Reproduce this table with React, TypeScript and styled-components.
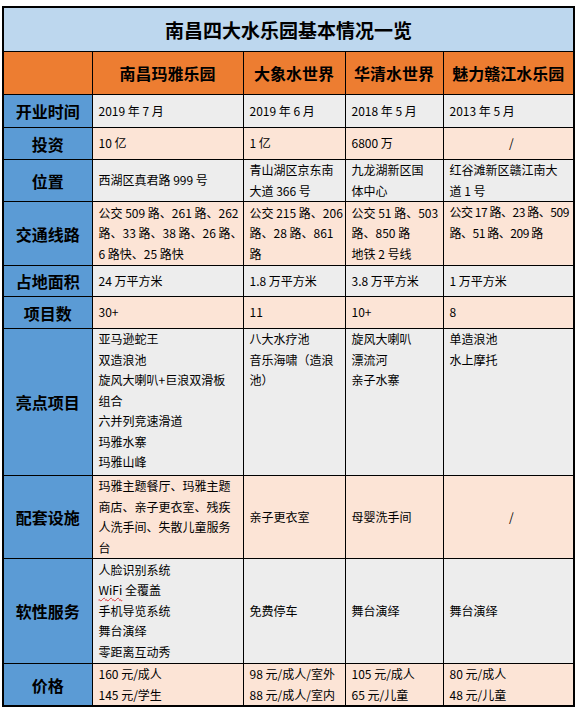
import React from 'react'
import styled, { createGlobalStyle } from 'styled-components'

type Tone = 'gray' | 'peach'

type CellData = {
    lines: string[]
    top?: boolean
    center?: boolean
    tight?: boolean
}

type RowData = {
    label: string
    height: number
    tone: Tone
    cells: CellData[]
}

const GlobalStyle = createGlobalStyle`
    body {
        margin: 0;
        background: #ffffff;
        font-family: 'Noto Sans CJK SC', 'Noto Sans', sans-serif;
        color: #000000;
    }
`

const Page = styled.div`
    padding: 6px 0 0 2px;
`

const Table = styled.table`
    width: 571px;
    table-layout: fixed;
    border-collapse: collapse;
    border: 2px solid #000000;
`

const Col = styled.col<{ $w: number }>`
    width: ${(p) => p.$w}px;
`

const TitleCell = styled.th`
    height: 43px;
    padding: 0;
    background: #bdd7ee;
    font-size: 19px;
    font-weight: 700;
    text-align: center;
    vertical-align: middle;
    border: 1px solid #000000;
`

const CornerCell = styled.th`
    height: 42px;
    padding: 0;
    background: #ed7d31;
    border: 1px solid #000000;
    border-top: none;
`

const HeadCell = styled.th`
    height: 42px;
    padding: 0;
    background: #ed7d31;
    font-size: 16px;
    font-weight: 700;
    text-align: center;
    vertical-align: middle;
    white-space: nowrap;
    border: 1px solid #000000;
    border-top: none;
`

const LabelCell = styled.th<{ $h: number }>`
    height: ${(p) => p.$h}px;
    padding: 0;
    background: #5b9bd5;
    font-size: 16px;
    font-weight: 700;
    text-align: center;
    vertical-align: middle;
    border: 1px solid #000000;
`

const DataCell = styled.td<{ $h: number; $tone: Tone; $top?: boolean; $center?: boolean; $tight?: boolean }>`
    height: ${(p) => p.$h}px;
    padding: 0 0 0 6px;
    background: ${(p) => (p.$tone === 'gray' ? '#ededed' : '#fce4d6')};
    font-size: 12px;
    line-height: 20.5px;
    letter-spacing: ${(p) => (p.$tight ? '-0.45px' : '0')};
    text-align: ${(p) => (p.$center ? 'center' : 'left')};
    vertical-align: ${(p) => (p.$top ? 'top' : 'middle')};
    border: 1px solid #000000;
    overflow: hidden;
`

const Line = styled.div`
    white-space: nowrap;
`

const Typo = styled.span`
    text-decoration: underline wavy #e03030;
    text-decoration-thickness: 1px;
    text-underline-offset: 2px;
`

const widths = [89, 151, 102, 98, 131]

const parks = ['南昌玛雅乐园', '大象水世界', '华清水世界', '魅力赣江水乐园']

const rows: RowData[] = [
    {
        label: '开业时间',
        height: 32,
        tone: 'gray',
        cells: [
            { lines: ['2019 年 7 月'] },
            { lines: ['2019 年 6 月'] },
            { lines: ['2018 年 5 月'] },
            { lines: ['2013 年 5 月'] },
        ],
    },
    {
        label: '投资',
        height: 31,
        tone: 'peach',
        cells: [{ lines: ['10 亿'] }, { lines: ['1 亿'] }, { lines: ['6800 万'] }, { lines: ['/'], center: true }],
    },
    {
        label: '位置',
        height: 41,
        tone: 'gray',
        cells: [
            { lines: ['西湖区真君路 999 号'] },
            { lines: ['青山湖区京东南', '大道 366 号'] },
            { lines: ['九龙湖新区国', '体中心'] },
            { lines: ['红谷滩新区赣江南大', '道 1 号'] },
        ],
    },
    {
        label: '交通线路',
        height: 63,
        tone: 'peach',
        cells: [
            { lines: ['公交 509 路、261 路、262', '路、33 路、38 路、26 路、', '6 路快、25 路快'] },
            { lines: ['公交 215 路、206', '路、28 路、861', '路'] },
            { lines: ['公交 51 路、503', '路、850 路', '地铁 2 号线'] },
            { lines: ['公交 17 路、23 路、509', '路、51 路、209 路'], top: true, tight: true },
        ],
    },
    {
        label: '占地面积',
        height: 30,
        tone: 'gray',
        cells: [
            { lines: ['24 万平方米'] },
            { lines: ['1.8 万平方米'] },
            { lines: ['3.8 万平方米'] },
            { lines: ['1 万平方米'] },
        ],
    },
    {
        label: '项目数',
        height: 31,
        tone: 'peach',
        cells: [{ lines: ['30+'] }, { lines: ['11'] }, { lines: ['10+'] }, { lines: ['8'] }],
    },
    {
        label: '亮点项目',
        height: 146,
        tone: 'gray',
        cells: [
            {
                lines: ['亚马逊蛇王', '双造浪池', '旋风大喇叭+巨浪双滑板', '组合', '六并列竞速滑道', '玛雅水寨', '玛雅山峰'],
                top: true,
            },
            { lines: ['八大水疗池', '音乐海啸（造浪', '池）'], top: true },
            { lines: ['旋风大喇叭', '漂流河', '亲子水寨'], top: true },
            { lines: ['单造浪池', '水上摩托'], top: true },
        ],
    },
    {
        label: '配套设施',
        height: 82,
        tone: 'peach',
        cells: [
            { lines: ['玛雅主题餐厅、玛雅主题', '商店、亲子更衣室、残疾', '人洗手间、失散儿童服务', '台'] },
            { lines: ['亲子更衣室'] },
            { lines: ['母婴洗手间'] },
            { lines: ['/'], center: true },
        ],
    },
    {
        label: '软性服务',
        height: 104,
        tone: 'gray',
        cells: [
            { lines: ['人脸识别系统', 'WiFi 全覆盖', '手机导览系统', '舞台演绎', '零距离互动秀'] },
            { lines: ['免费停车'] },
            { lines: ['舞台演绎'] },
            { lines: ['舞台演绎'] },
        ],
    },
    {
        label: '价格',
        height: 41,
        tone: 'peach',
        cells: [
            { lines: ['160 元/成人', '145 元/学生'] },
            { lines: ['98 元/成人/室外', '88 元/成人/室内'] },
            { lines: ['105 元/成人', '65 元/儿童'] },
            { lines: ['80 元/成人', '48 元/儿童'] },
        ],
    },
]

// spell-check squiggle under "WiFi", like the source sheet
const renderLine = (text: string) => {
    if (text.startsWith('WiFi')) {
        return (
            <>
                <Typo>WiFi</Typo>
                {text.slice(4)}
            </>
        )
    }
    return text
}

const App = () => {
    return (
        <Page>
            <GlobalStyle />
            <Table>
                <colgroup>
                    {widths.map((w, i) => (
                        <Col key={i} $w={w} />
                    ))}
                </colgroup>
                <thead>
                    <tr>
                        <TitleCell colSpan={5}>南昌四大水乐园基本情况一览</TitleCell>
                    </tr>
                    <tr>
                        <CornerCell />
                        {parks.map((name) => (
                            <HeadCell key={name}>{name}</HeadCell>
                        ))}
                    </tr>
                </thead>
                <tbody>
                    {rows.map((row) => (
                        <tr key={row.label}>
                            <LabelCell $h={row.height}>{row.label}</LabelCell>
                            {row.cells.map((cell, i) => (
                                <DataCell
                                    key={i}
                                    $h={row.height}
                                    $tone={row.tone}
                                    $top={cell.top}
                                    $center={cell.center}
                                    $tight={cell.tight}
                                >
                                    {cell.lines.map((text, j) => (
                                        <Line key={j}>{renderLine(text)}</Line>
                                    ))}
                                </DataCell>
                            ))}
                        </tr>
                    ))}
                </tbody>
            </Table>
        </Page>
    )
}

export default App
